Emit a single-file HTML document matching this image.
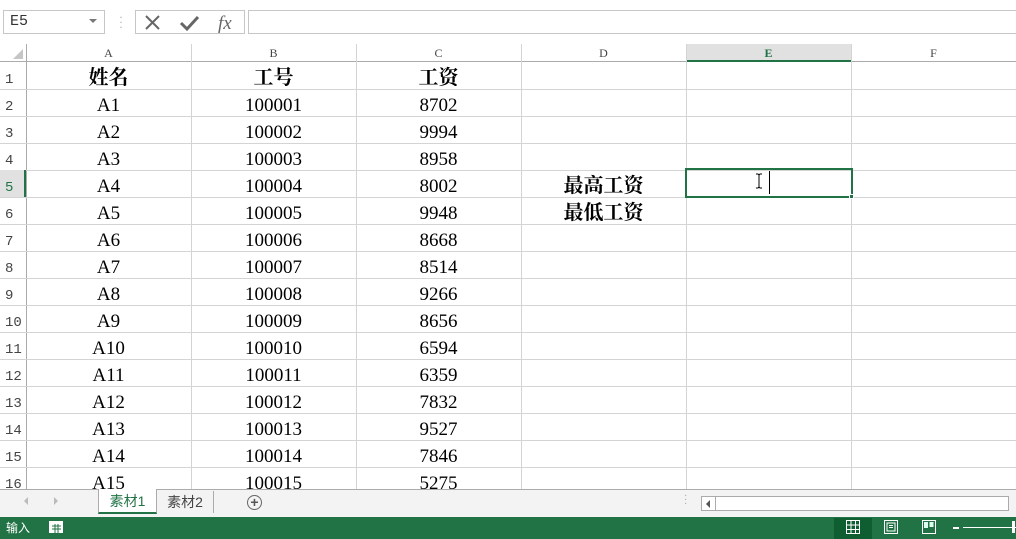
<!DOCTYPE html>
<html><head><meta charset="utf-8"><style>
*{margin:0;padding:0;box-sizing:border-box}
body{width:1016px;height:539px;overflow:hidden;background:#fff;position:relative;font-family:"Liberation Serif","Noto Serif CJK SC",serif}
.a{position:absolute}
.cell{position:absolute;height:27px;line-height:33px;text-align:center;font-size:19px;color:#000}
.rh{position:absolute;left:0;width:26px;height:27px;font-size:14px;color:#444;padding-left:5px;line-height:36px;font-family:"Liberation Mono",monospace}
.ch{position:absolute;top:44px;height:17px;font-size:12px;color:#444;text-align:center;line-height:19px}
.b{font-weight:bold;font-size:20px}
</style></head><body>
<div class="a" style="left:3px;top:10px;width:102px;height:24px;border:1px solid #c6c6c6;font:15px 'Liberation Mono',monospace;color:#333;padding-left:6px;line-height:22px">E5</div>
<div class="a" style="left:89px;top:19px;width:0;height:0;border-left:4px solid transparent;border-right:4px solid transparent;border-top:4px solid #777"></div>
<div class="a" style="left:119px;top:15px;color:#aaa;font-size:12px;line-height:5px">·<br>·<br>·</div>
<div class="a" style="left:135px;top:10px;width:110px;height:24px;border:1px solid #c6c6c6"></div>
<svg class="a" style="left:143px;top:13px" width="100" height="20"><path d="M3 3 L16 16 M16 3 L3 16" stroke="#666" stroke-width="2"/><path d="M38 10 L44 16 L55 4" stroke="#666" stroke-width="3" fill="none"/><text x="75" y="16" font-family="Liberation Serif" font-style="italic" font-size="19" fill="#666">fx</text></svg>
<div class="a" style="left:248px;top:10px;width:770px;height:24px;border:1px solid #c6c6c6"></div>
<div class="a" style="left:0;top:44px;width:1016px;height:18px;background:#fff;border-bottom:1px solid #ababab"></div>
<div class="a" style="left:686px;top:44px;width:165px;height:18px;background:#e1e1e1;border-bottom:2px solid #217346"></div>
<svg class="a" style="left:12px;top:48px" width="12" height="12"><path d="M11 1 L11 11 L1 11 Z" fill="#c6c6c6"/></svg>
<div class="ch" style="left:26px;width:165px">A</div>
<div class="ch" style="left:191px;width:165px">B</div>
<div class="ch" style="left:356px;width:165px">C</div>
<div class="ch" style="left:521px;width:165px">D</div>
<div class="ch" style="left:686px;width:165px;color:#217346;font-weight:bold">E</div>
<div class="ch" style="left:851px;width:165px">F</div>
<div class="a" style="left:26px;top:44px;width:1px;height:445px;background:#ababab"></div>
<div class="a" style="left:191px;top:44px;width:1px;height:445px;background:#d4d4d4"></div>
<div class="a" style="left:356px;top:44px;width:1px;height:445px;background:#d4d4d4"></div>
<div class="a" style="left:521px;top:44px;width:1px;height:445px;background:#d4d4d4"></div>
<div class="a" style="left:686px;top:44px;width:1px;height:445px;background:#d4d4d4"></div>
<div class="a" style="left:851px;top:44px;width:1px;height:445px;background:#d4d4d4"></div>
<div id="rows"></div>
<script>
var d=[["姓名","工号","工资"],["A1","100001","8702"],["A2","100002","9994"],["A3","100003","8958"],["A4","100004","8002"],["A5","100005","9948"],["A6","100006","8668"],["A7","100007","8514"],["A8","100008","9266"],["A9","100009","8656"],["A10","100010","6594"],["A11","100011","6359"],["A12","100012","7832"],["A13","100013","9527"],["A14","100014","7846"],["A15","100015","5275"]];
var h="";
for(var i=0;i<16;i++){var t=62+27*i;
h+='<div class="a" style="left:0;top:'+(t+27)+'px;width:1016px;height:1px;background:#d4d4d4"></div>';
h+='<div class="rh" style="top:'+t+'px'+(i==4?';background:#e1e1e1;color:#217346;border-right:2px solid #217346':'')+'">'+(i+1)+'</div>';
var cls=i==0?"cell b":"cell";
h+='<div class="'+cls+'" style="left:26px;width:165px;top:'+t+'px">'+d[i][0]+'</div>';
h+='<div class="'+cls+'" style="left:191px;width:165px;top:'+t+'px">'+d[i][1]+'</div>';
h+='<div class="'+cls+'" style="left:356px;width:165px;top:'+t+'px">'+d[i][2]+'</div>';}
h+='<div class="cell b" style="left:521px;width:165px;top:170px">最高工资</div>';
h+='<div class="cell b" style="left:521px;width:165px;top:197px">最低工资</div>';
document.getElementById("rows").innerHTML=h;
</script>
<div class="a" style="left:685px;top:168px;width:168px;height:30px;border:2px solid #217346"></div>
<div class="a" style="left:849px;top:194px;width:5px;height:5px;background:#217346;border:1px solid #fff"></div>
<div class="a" style="left:769px;top:171px;width:1px;height:23px;background:#000"></div>
<svg class="a" style="left:755px;top:173px" width="8" height="16"><path d="M1 1h2l1 1 1-1h2M4 2v12M1 15h2l1-1 1 1h2" stroke="#000" fill="none"/></svg>
<div class="a" style="left:0;top:489px;width:1016px;height:28px;background:#f3f3f3;border-top:1px solid #ababab"></div>
<div class="a" style="left:24px;top:497px;width:0;height:0;border-top:4px solid transparent;border-bottom:4px solid transparent;border-right:4px solid #bbb"></div>
<div class="a" style="left:54px;top:497px;width:0;height:0;border-top:4px solid transparent;border-bottom:4px solid transparent;border-left:4px solid #bbb"></div>
<div class="a" style="left:98px;top:489px;width:59px;height:25px;background:#fff;border-left:1px solid #ababab;border-right:1px solid #ababab;border-bottom:2px solid #217346;font:14px 'Liberation Sans','Noto Sans CJK SC',sans-serif;color:#217346;text-align:center;line-height:24px">素材1</div>
<div class="a" style="left:157px;top:491px;width:57px;height:22px;border-right:1px solid #ababab;font:14px 'Liberation Sans','Noto Sans CJK SC',sans-serif;color:#444;text-align:center;line-height:22px">素材2</div>
<div class="a" style="left:247px;top:495px;width:15px;height:15px;border:1.5px solid #666;border-radius:50%;font:bold 14px 'Liberation Sans';color:#555;text-align:center;line-height:12px">+</div>
<div class="a" style="left:684px;top:495px;color:#aaa;font-size:10px;line-height:4px">·<br>·<br>·</div>
<div class="a" style="left:701px;top:496px;width:308px;height:15px;background:#fff;border:1px solid #ababab"></div>
<div class="a" style="left:702px;top:497px;width:14px;height:13px;border-right:1px solid #ababab"></div>
<div class="a" style="left:706px;top:500px;width:0;height:0;border-top:4px solid transparent;border-bottom:4px solid transparent;border-right:4px solid #555"></div>
<div class="a" style="left:0;top:517px;width:1016px;height:22px;background:#217346"></div>
<div class="a" style="left:6px;top:519px;font:12px 'Liberation Sans','Noto Sans CJK SC',sans-serif;color:#fff;line-height:18px">输入</div>
<svg class="a" style="left:48px;top:520px" width="16" height="14"><rect x="1" y="1" width="14" height="12" fill="#fff"/><path d="M4 6h9M4 9h9M7 4v9M10 4v9" stroke="#217346"/></svg>
<div class="a" style="left:834px;top:518px;width:38px;height:21px;background:#0f5e32"></div>
<svg class="a" style="left:846px;top:520px" width="14" height="14"><path d="M0.5 0.5h13v13h-13zM0.5 5h13M0.5 9.5h13M5 0.5v13M9.5 0.5v13" stroke="#fff" fill="none"/></svg>
<svg class="a" style="left:884px;top:520px" width="14" height="14"><path d="M0.5 0.5h13v13h-13zM3 3h8v8h-8zM5 5.5h4M5 7.5h4" stroke="#fff" fill="none"/></svg>
<svg class="a" style="left:922px;top:520px" width="14" height="14"><path d="M0.5 0.5h13v13h-13z" stroke="#fff" fill="none"/><path d="M2 2h4v6h-4zM7.5 2h4v5h-4z" fill="#dfe"/></svg>
<div class="a" style="left:953px;top:527px;width:6px;height:2px;background:#fff"></div>
<div class="a" style="left:963px;top:527px;width:53px;height:1px;background:#fff"></div>
<div class="a" style="left:1012px;top:521px;width:3px;height:12px;background:#fff"></div>
</body></html>
